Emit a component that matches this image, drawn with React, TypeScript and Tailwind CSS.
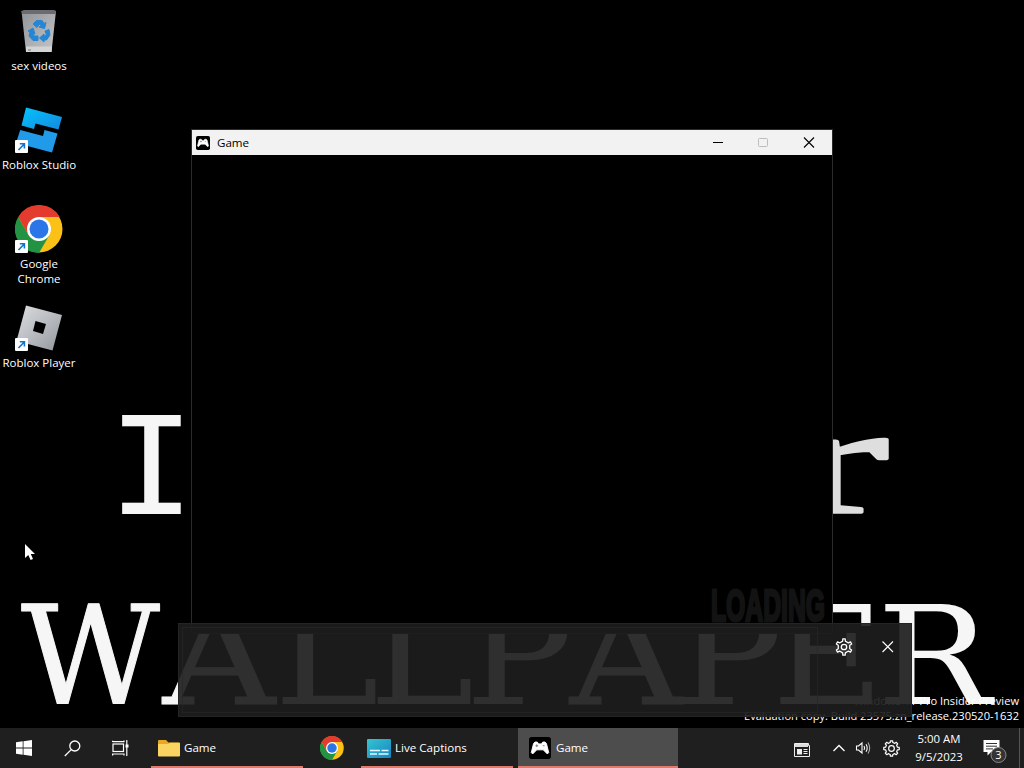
import type { ReactNode } from 'react';
import clsx from 'clsx';

// ── Icons ──────────────────────────────────────────────────────────────────

function gearPoints(teeth: number, outer: number, inner: number, top = 0.2, base = 0.3) {
  const points: string[] = [];
  for (let i = 0; i < teeth; i++) {
    const steps: [number, number][] = [
      [-base, inner],
      [-top, outer],
      [top, outer],
      [base, inner],
    ];
    for (const [offset, r] of steps) {
      const a = ((i + offset) / teeth) * Math.PI * 2 - Math.PI / 2;
      points.push(`${(12 + r * Math.cos(a)).toFixed(2)},${(12 + r * Math.sin(a)).toFixed(2)}`);
    }
  }
  return points.join(' ');
}

function Gear({ teeth, size }: { teeth: number; size: number }) {
  const wide = teeth === 6;
  return (
    <svg width={size} height={size} viewBox="0 0 24 24" fill="none" stroke="#fff" strokeWidth="1.7" strokeLinejoin="round">
      <polygon points={gearPoints(teeth, 11, wide ? 8 : 8.6, wide ? 0.14 : 0.18, wide ? 0.21 : 0.28)} />
      <circle cx="12" cy="12" r={wide ? 3.6 : 4} />
    </svg>
  );
}

function ChromeIcon({ size }: { size: number }) {
  return (
    <svg width={size} height={size} viewBox="0 0 48 48">
      <circle cx="24" cy="24" r="23.5" fill="#fbc116" />
      <path d="M3.2 12 L13.6 30 L24 34 L34.4 30 L24 48 A24 24 0 0 1 3.2 12 Z" fill="#229342" />
      <path d="M3.2 12 L13.6 30 L24 24 V12 H44.8 A24 24 0 0 0 3.2 12 Z" fill="#e33b2e" />
      <circle cx="24" cy="24" r="12" fill="#fff" />
      <circle cx="24" cy="24" r="9.5" fill="#2a76e8" />
    </svg>
  );
}

function RecycleBin() {
  return (
    <svg width="48" height="48" viewBox="0 0 48 48">
      <defs>
        <linearGradient id="bin" x1="0" y1="0" x2="1" y2="1">
          <stop offset="0" stopColor="#909397" />
          <stop offset="1" stopColor="#c6c7ca" />
        </linearGradient>
      </defs>
      <path d="M6.5 5 H41 L36.5 46 H11 Z" fill="url(#bin)" />
      <path d="M6.5 5 L9 4 H39 L41 5 L40.5 8 H7 Z" fill="#6a6c6f" />
      <path d="M11 40.5 H37 L36.5 46 H11 Z" fill="#d4d4d4" />
      <path d="M13 44 h3" stroke="#777" />
      <g fill="#2486d6" stroke="#2486d6" strokeWidth="1">
        <path d="M18 18 L21.5 14.5 H27 L29 17.5 L31 16.5 L29.5 22.5 L24 21 L26 19.5 L24.5 18 L22 21.5 Z" />
        <path d="M18 22 L20 28 L18 27.5 L18.5 30 H23 V34.5 H18 L14 30 L15 26 L13 25 Z" />
        <path d="M30 25 L34 23.5 L35 29 L31.5 34 H29 V36 L24.5 32 L29 28 V30 L31.5 29 Z" />
      </g>
    </svg>
  );
}

function RobloxStudio() {
  return (
    <svg width="48" height="48" viewBox="0 0 48 48">
      <defs>
        <linearGradient id="studio" x1="0" y1="0" x2="1" y2="1">
          <stop offset="0" stopColor="#02c4fb" />
          <stop offset="1" stopColor="#1688e0" />
        </linearGradient>
      </defs>
      <path d="M11 2.5 L47 12 L43.5 24.5 L20.5 18.5 L19 24 L6.5 20.5 Z" fill="url(#studio)" />
      <path d="M5.2 25 L28 31 L29.5 25 L42.5 28.5 L37 47.5 L1 38 Z" fill="#219be9" />
    </svg>
  );
}

function RobloxPlayer() {
  return (
    <svg width="48" height="48" viewBox="0 0 48 48">
      <defs>
        <linearGradient id="player" x1="0" y1="0" x2="1" y2="1">
          <stop offset="0" stopColor="#dcdee0" />
          <stop offset="0.5" stopColor="#b9bcc1" />
          <stop offset="1" stopColor="#92959c" />
        </linearGradient>
      </defs>
      <path d="M11 2.5 L47 12 L37.5 47.5 L1.5 38 Z" fill="url(#player)" />
      <path d="M20.5 18 L31 21 L28 31 L18 28 Z" fill="#000" />
    </svg>
  );
}

function ShortcutArrow() {
  return (
    <svg className="absolute bottom-0 left-0" width="13" height="13" viewBox="0 0 13 13">
      <rect width="13" height="13" rx="1" fill="#fff" />
      <path d="M3.5 10 L9 4.2 M4.8 3.7 H9.4 V8.4" fill="none" stroke="#1473cf" strokeWidth="1.6" />
    </svg>
  );
}

function GamepadIcon({ size }: { size: number }) {
  return (
    <svg width={size} height={size} viewBox="0 0 24 24">
      <rect width="24" height="24" rx="3" fill="#000" />
      <path
        d="M5 7 L6.5 5.5 H9 L10.5 7.5 H13.5 L15 5.5 H17.5 L19 7 L21.5 17 L20 18.5 L15.5 14 H8.5 L4 18.5 L2.5 17 Z"
        fill="#fff"
        stroke="#fff"
        strokeLinejoin="round"
      />
      <path d="M7 9.5 h3 M8.5 8 v3 M15 9.5 h2" stroke="#777" strokeWidth="1" />
    </svg>
  );
}

function FolderIcon() {
  return (
    <svg width="22" height="18" viewBox="0 0 22 18">
      <path d="M0 2 Q0 1 1 1 H8 L10.5 3.5 H21 Q22 3.5 22 4.5 V17 H0 Z" fill="#e9a820" />
      <path d="M0 5 H10 L12 3.8 H21 Q22 3.8 22 5 V16.5 Q22 17.5 21 17.5 H1 Q0 17.5 0 16.5 Z" fill="#fcd462" />
    </svg>
  );
}

function CaptionsIcon() {
  return (
    <svg width="24" height="19" viewBox="0 0 24 19">
      <defs>
        <linearGradient id="captions" x1="0" y1="0" x2="1" y2="1">
          <stop offset="0" stopColor="#35c5cf" />
          <stop offset="1" stopColor="#1684c4" />
        </linearGradient>
      </defs>
      <rect width="24" height="19" rx="1" fill="url(#captions)" />
      <path d="M3 11.5 h10 M14.5 11.5 h7 M3 15 h7 M11.5 15 h10" stroke="#e6fbff" strokeWidth="1.7" />
    </svg>
  );
}

// ── Wallpaper ──────────────────────────────────────────────────────────────

const LETTERS = [
  { char: 'W', x: 21, width: 139, stroke: 1 },
  { char: 'A', x: 163, width: 112, stroke: 1 },
  { char: 'L', x: 274, width: 105, stroke: 0 },
  { char: 'L', x: 369, width: 105, stroke: 0 },
  { char: 'P', x: 465, width: 108, stroke: 0 },
  { char: 'A', x: 570, width: 112, stroke: 1 },
  { char: 'P', x: 675, width: 108, stroke: 0 },
  { char: 'E', x: 772, width: 112, stroke: 0 },
  { char: 'R', x: 877, width: 114, stroke: 0 },
];

function Wallpaper() {
  return (
    <svg className="absolute inset-0" width="1024" height="768" fill="#f6f6f6" stroke="#f6f6f6" strokeWidth="0" strokeLinejoin="round">
      <text x="108" y="514" fontFamily="'DejaVu Sans Mono'" fontSize="135" textLength="87" lengthAdjust="spacingAndGlyphs">
        I
      </text>
      <text
        x="791"
        y="512"
        fontFamily="'Liberation Serif'"
        fontSize="154"
        textLength="97"
        lengthAdjust="spacingAndGlyphs"
        fill="#dedede"
        stroke="#dedede"
        strokeWidth="3.5"
      >
        r
      </text>
      {LETTERS.map((l) => (
        <text
          key={l.x}
          x={l.x}
          y="704"
          fontFamily="'DejaVu Serif'"
          fontSize="136"
          textLength={l.width}
          lengthAdjust="spacingAndGlyphs"
          strokeWidth={l.stroke}
        >
          {l.char}
        </text>
      ))}
    </svg>
  );
}

// ── Desktop Icons ──────────────────────────────────────────────────────────

const SHORTCUTS: { label: string; icon: ReactNode; link: boolean }[] = [
  { label: 'sex videos', icon: <RecycleBin />, link: false },
  { label: 'Roblox Studio', icon: <RobloxStudio />, link: true },
  { label: 'Google Chrome', icon: <ChromeIcon size={48} />, link: true },
  { label: 'Roblox Player', icon: <RobloxPlayer />, link: true },
];

function DesktopIcons() {
  return (
    <div className="relative flex w-[78px] flex-col text-[11.5px]">
      {SHORTCUTS.map((s) => {
        const twoLines = s.label === 'Google Chrome';
        return (
          <div key={s.label} className={clsx('flex h-[99px] flex-col items-center', twoLines ? 'pt-[7px]' : 'pt-1.5')}>
            <div className="relative">
              {s.icon}
              {s.link && <ShortcutArrow />}
            </div>
            <span className={clsx('text-center leading-[15px]', twoLines ? 'mt-[3px] w-12' : 'mt-1 whitespace-nowrap')}>
              {s.label}
            </span>
          </div>
        );
      })}
    </div>
  );
}

// ── Windows ────────────────────────────────────────────────────────────────

function GameWindow() {
  return (
    <div className="absolute top-[129px] left-[191px] flex h-[505px] w-[642px] flex-col border border-[#2b2b2b] bg-black">
      <div className="flex h-[25px] shrink-0 items-center bg-[#f2f2f2] pl-1 text-black">
        <GamepadIcon size={14} />
        <span className="ml-[7px] flex-1">Game</span>
        <svg width="136" height="25" viewBox="0 0 136 25" fill="none" stroke="#000">
          <path d="M17 12.5 h10" />
          <rect x="62.5" y="8.5" width="9" height="8" rx="1" stroke="#bdbdbd" />
          <path d="M108 7.5 L118 17.5 M118 7.5 L108 17.5" strokeWidth="1.1" />
        </svg>
      </div>
      <div className="flex flex-1 items-end justify-end">
        <svg width="126" height="60" viewBox="0 0 126 60">
          <text
            x="5"
            y="48"
            fontFamily="'Liberation Sans Narrow', 'Liberation Sans'"
            fontWeight="700"
            fontSize="45"
            textLength="114"
            lengthAdjust="spacingAndGlyphs"
            fill="#131313"
            stroke="#131313"
            strokeWidth="3"
          >
            LOADING
          </text>
        </svg>
      </div>
    </div>
  );
}

function CaptionsBar() {
  return (
    <div className="absolute top-[623px] left-[178px] flex h-[94px] w-[734px] border border-[#242424] bg-[#1d1d1d]/92 p-[3px]">
      <div className="flex-1 border border-[#272727]/70" />
      <div className="flex w-[90px] items-start justify-between pt-[11px] pr-[13px] pl-[17px]">
        <Gear teeth={6} size={18} />
        <svg className="mt-0.5" width="14" height="14" viewBox="0 0 14 14" stroke="#fff" strokeWidth="1.1">
          <path d="M1.5 1.5 L12 12 M12 1.5 L1.5 12" />
        </svg>
      </div>
    </div>
  );
}

// ── Taskbar ────────────────────────────────────────────────────────────────

function TaskButton({ icon, label, className }: { icon: ReactNode; label: string; className: string }) {
  return (
    <div className={clsx('flex h-full items-center border-b-2 border-[#df7b6c]', className)}>
      {icon}
      <span className="whitespace-nowrap">{label}</span>
    </div>
  );
}

function Taskbar() {
  return (
    <div className="absolute bottom-0 left-0 flex h-10 w-full items-center bg-[#1f1f1f]">
      <div className="flex w-12 justify-center">
        <svg width="16" height="16" viewBox="0 0 16 16" fill="#fff">
          <path d="M0 2.3 L6.7 1.3 V7.6 H0 Z M7.5 1.2 L16 0 V7.6 H7.5 Z M0 8.4 H6.7 V14.7 L0 13.7 Z M7.5 8.4 H16 V16 L7.5 14.8 Z" />
        </svg>
      </div>
      <div className="flex w-12 justify-center">
        <svg width="17" height="17" viewBox="0 0 17 17" fill="none" stroke="#fff" strokeWidth="1.3">
          <circle cx="10.8" cy="6" r="5" />
          <path d="M7.2 9.6 L0.8 16" />
        </svg>
      </div>
      <div className="flex w-12 justify-center">
        <svg width="17" height="16" viewBox="0 0 17 16" fill="none" stroke="#fff" strokeWidth="1.2">
          <rect x="1" y="4" width="10.5" height="7.5" />
          <path d="M0.6 2 V0.8 M0.6 1.6 H12 V0.5 M0.6 15.5 V14 H12 V15.5 M14.8 0 V16" />
          <rect x="13.5" y="4.5" width="3" height="3" fill="#fff" stroke="none" />
        </svg>
      </div>

      <TaskButton icon={<FolderIcon />} label="Game" className="ml-[7px] w-[152px] gap-1 pt-0.5 pl-[7px]" />
      <div className="ml-[17px] w-6">
        <ChromeIcon size={24} />
      </div>
      <TaskButton icon={<CaptionsIcon />} label="Live Captions" className="ml-[17px] w-[152px] gap-1 pt-0.5 pl-1.5" />
      <TaskButton icon={<GamepadIcon size={22} />} label="Game" className="ml-[5px] w-[160px] gap-[5px] bg-[#4d4d4d] pt-0.5 pl-[11px]" />

      <div className="ml-auto flex h-full items-center">
        <svg width="16" height="14" viewBox="0 0 16 14" className="mt-[3px]">
          <path d="M0.5 0.5 H14.5 V2.5 H15.5 V13.5 H0.5 Z" fill="none" stroke="#eee" />
          <path d="M1 1 H14 V4 H1 Z" fill="#ddd" />
          <rect x="3" y="6" width="5" height="5.5" fill="#eee" />
          <path d="M9.5 6.5 h4 M9.5 8.5 h4 M9.5 10.5 h4" stroke="#eee" />
        </svg>
        <svg className="ml-[22px]" width="14" height="8" viewBox="0 0 14 8" fill="none" stroke="#fff" strokeWidth="1.3">
          <path d="M1.5 7 L7 1.5 L12.5 7" />
        </svg>
        <svg className="ml-[9px]" width="18" height="14" viewBox="0 0 18 14" fill="none" stroke="#fff" strokeWidth="1.1">
          <path d="M1.5 5 H3.5 L7 2 V12 L3.5 9 H1.5 Z" />
          <path d="M9 5 Q10.2 7 9 9" />
          <path d="M11 3.2 Q13.4 7 11 10.8" />
          <path d="M13 1.5 Q16.4 7 13 12.5" stroke="#aaa" />
        </svg>
        <div className="ml-[10px]">
          <Gear teeth={8} size={17} />
        </div>
        <div className="ml-3.5 flex w-[50px] flex-col items-center text-[11.4px] leading-[18px] whitespace-nowrap">
          <span>5:00 AM</span>
          <span>9/5/2023</span>
        </div>
        <svg className="mt-2 ml-[19px]" width="26" height="25" viewBox="0 0 26 25">
          <path d="M0.5 0 H16.5 V12 H8 L4.5 15.5 V12 H0.5 Z" fill="#fff" />
          <path d="M3 3.5 h11 M3 6.2 h11 M3 8.9 h7" stroke="#333" />
          <circle cx="15.5" cy="15" r="7.5" fill="#343434" stroke="#898989" />
          <text x="15.5" y="19" textAnchor="middle" fontSize="11" fill="#fff">
            3
          </text>
        </svg>
        <div className="mr-1 ml-[10px] h-full w-px bg-[#555]" />
      </div>
    </div>
  );
}

// ── Desktop ────────────────────────────────────────────────────────────────

export default function App() {
  return (
    <div className="relative h-[768px] w-[1024px] overflow-hidden bg-black font-['Open_Sans','Noto_Sans',sans-serif] text-[11.6px] text-white">
      <Wallpaper />
      <DesktopIcons />
      <div className="absolute right-[5px] bottom-[45px] text-right text-[11.1px] leading-[15px] whitespace-nowrap">
        <p>Windows 11 Pro Insider Preview</p>
        <p>Evaluation copy. Build 23575.zn_release.230520-1632</p>
      </div>
      <GameWindow />
      <CaptionsBar />
      <Taskbar />

      <svg className="absolute top-[543px] left-[24px]" width="12" height="18" viewBox="0 0 12 18">
        <path d="M1 1 V15 L4.3 11.9 L6.6 17 L9 16 L6.8 11 H11 Z" fill="#fff" />
      </svg>
    </div>
  );
}
